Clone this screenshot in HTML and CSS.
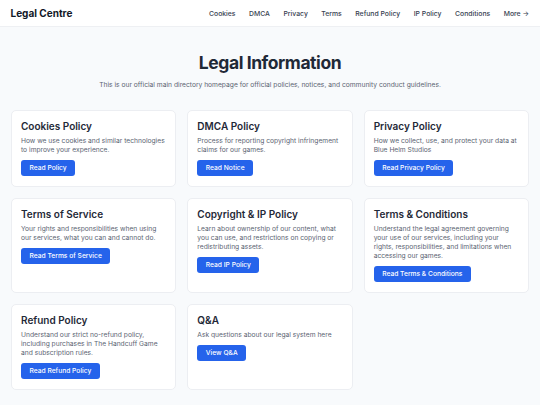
FILE: index.html
```html
<!DOCTYPE html>
<html>
<head>
  <title>Legal Centre</title>
  <link rel="stylesheet" href="styles.css">
</head>
<body>
  <header class="topbar">
    <div class="brand">Legal Centre</div>
    <nav class="nav">
      <a href="#">Cookies</a>
      <a href="#">DMCA</a>
      <a href="#">Privacy</a>
      <a href="#">Terms</a>
      <a href="#">Refund Policy</a>
      <a href="#">IP Policy</a>
      <a href="#">Conditions</a>
      <a href="#">More &rarr;</a>
    </nav>
  </header>

  <section class="intro">
    <h1>Legal Information</h1>
    <p>This is our official main directory homepage for official policies, notices, and community conduct guidelines.</p>
  </section>

  <main class="grid">
    <div class="card">
      <h2>Cookies Policy</h2>
      <p>How we use cookies and similar technologies to improve your experience.</p>
      <a class="btn" href="#">Read Policy</a>
    </div>
    <div class="card">
      <h2>DMCA Policy</h2>
      <p>Process for reporting copyright infringement claims for our games.</p>
      <a class="btn" href="#">Read Notice</a>
    </div>
    <div class="card">
      <h2>Privacy Policy</h2>
      <p>How we collect, use, and protect your data at Blue Helm Studios</p>
      <a class="btn" href="#">Read Privacy Policy</a>
    </div>

    <div class="card">
      <h2>Terms of Service</h2>
      <p>Your rights and responsibilities when using our services, what you can and cannot do.</p>
      <a class="btn" href="#">Read Terms of Service</a>
    </div>
    <div class="card">
      <h2>Copyright &amp; IP Policy</h2>
      <p>Learn about ownership of our content, what you can use, and restrictions on copying or redistributing assets.</p>
      <a class="btn" href="#">Read IP Policy</a>
    </div>
    <div class="card">
      <h2>Terms &amp; Conditions</h2>
      <p>Understand the legal agreement governing your use of our services, including your rights, responsibilities, and limitations when accessing our games.</p>
      <a class="btn" href="#">Read Terms &amp; Conditions</a>
    </div>

    <div class="card">
      <h2>Refund Policy</h2>
      <p>Understand our strict no-refund policy, including purchases in The Handcuff Game and subscription rules.</p>
      <a class="btn" href="#">Read Refund Policy</a>
    </div>
    <div class="card">
      <h2>Q&amp;A</h2>
      <p>Ask questions about our legal system here</p>
      <a class="btn" href="#">View Q&amp;A</a>
    </div>
  </main>
</body>
</html>
```

FILE: styles.css
```css
body {
  margin: 0;
  background: #f8fafc;
  font-family: Inter, "Noto Sans", sans-serif;
  color: #111827;
}

a { text-decoration: none; }

/* top bar */
.topbar {
  height: 26px;
  display: flex;
  align-items: center;
  justify-content: space-between;
  padding: 0 11px 0 10.5px;
  background: #fff;
  border-bottom: 1px solid #eef0f3;
}
.brand {
  font-size: 10px;
  font-weight: 700;
}
.nav {
  display: flex;
  gap: 13.5px;
  font-size: 6.85px;
  font-weight: 500;
}
.nav a { color: #374151; }

/* heading */
.intro {
  text-align: center;
  padding-top: 24px;
}
.intro h1 {
  margin: 0 0 5px;
  font-size: 17.5px;
  line-height: 24px;
  font-weight: 700;
  letter-spacing: -0.025em;
  color: #1f2937;
}
.intro p {
  margin: 0 0 20px;
  font-size: 6.7px;
  line-height: 10px;
  color: #5b6472;
}

/* cards */
.grid {
  display: grid;
  grid-template-columns: repeat(3, 1fr);
  gap: 11px;
  padding: 0 11px;
}
.card {
  background: #fff;
  border: 1px solid #eceef2;
  border-radius: 5px;
  padding: 9px 9px 10px;
  display: flex;
  flex-direction: column;
  align-items: flex-start;
}
.card h2 {
  margin: 0 0 5px;
  font-size: 10px;
  line-height: 12px;
  font-weight: 600;
  color: #1f2937;
}
.card p {
  margin: 0 0 5px;
  font-size: 6.7px;
  line-height: 9px;
  color: #5b6472;
}
.btn {
  height: 16px;
  line-height: 16px;
  padding: 0 8.5px;
  border-radius: 3px;
  background: #2563eb;
  color: #fff;
  font-size: 6.7px;
  font-weight: 500;
}
```
